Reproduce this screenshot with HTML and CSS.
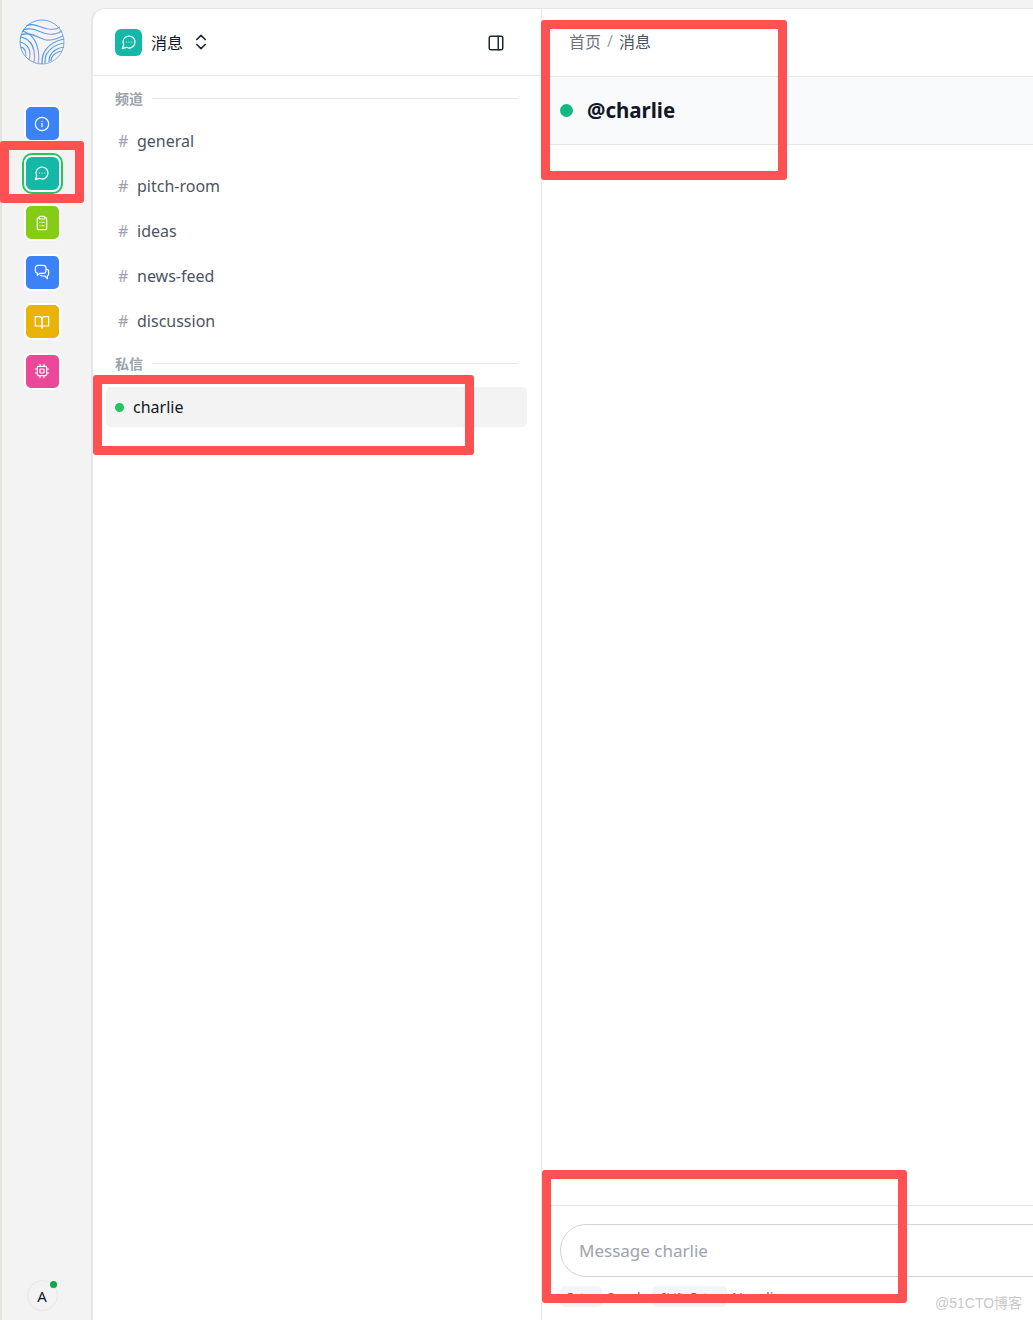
FILE: index.html
```html
<!DOCTYPE html>
<html lang="zh">
<head>
<meta charset="utf-8">
<title>消息</title>
<link rel="stylesheet" href="styles.css">
</head>
<body>
<div class="app">
  <nav class="rail">
    <svg class="logo" viewBox="0 0 46 46" fill="none" stroke-width="1.2">
      <defs>
        <linearGradient id="lg" x1="0" y1="0" x2="1" y2="1">
          <stop offset="0" stop-color="#3f95e6"/>
          <stop offset=".6" stop-color="#5b9fe0"/>
          <stop offset="1" stop-color="#b9a3d8"/>
        </linearGradient>
      </defs>
      <g stroke="url(#lg)">
        <circle cx="23" cy="23" r="22" stroke-width=".9"/>
        <path d="M7 7c8-4 15 2 22 3 5 1 9 0 12-2"/>
        <path d="M4 11c9-4 17 3 25 4 6 1 11-1 14-3"/>
        <path d="M2 16c9-4 17 3 25 5 7 1 13-2 17-4"/>
        <path d="M3 12c8 2 14 8 16 19 1 5 1 10 0 14"/>
        <path d="M1 18c8 1 13 7 14 14 1 5 1 8 0 12"/>
        <path d="M1 23c6 1 10 6 10 12 0 2 0 4-1 6"/>
        <path d="M2 28c4 1 5 5 5 9"/>
        <path d="M45 20c-10 2-18 8-21 16-1 3-1 5-1 9"/>
        <path d="M45 24c-8 1-15 6-18 12-1 3-1 5-1 8"/>
        <path d="M45 28c-7 1-12 5-14 9-1 2-1 4-1 6"/>
        <path d="M43 32c-5 1-8 3-10 6-1 1-1 2-1 4"/>
      </g>
    </svg>
    <div class="rail-items">
      <div class="rail-btn blue">
        <svg class="ic" viewBox="0 0 24 24"><circle cx="12" cy="12" r="10"/><path d="M12 16v-5M12 8h.01"/></svg>
      </div>
      <div class="rail-btn teal active">
        <svg class="ic" viewBox="0 0 24 24"><path d="M7.9 20A9 9 0 1 0 4 16.1L2 22Z"/><path d="M8 12h.01M12 12h.01M16 12h.01"/></svg>
      </div>
      <div class="rail-btn lime">
        <svg class="ic" viewBox="0 0 24 24"><rect x="8" y="2" width="8" height="4" rx="1"/><path d="M16 4h1a2 2 0 0 1 2 2v14a2 2 0 0 1-2 2H7a2 2 0 0 1-2-2V6a2 2 0 0 1 2-2h1"/><path d="M12 11h3M12 16h3M9 11h.01M9 16h.01"/></svg>
      </div>
      <div class="rail-btn blue">
        <svg class="ic" viewBox="0 0 24 24"><path d="M6 2h8a4 4 0 0 1 4 4v4a4 4 0 0 1-4 4H9l-4 3v-3.2A4 4 0 0 1 2 10V6a4 4 0 0 1 4-4z"/><path d="M18 8h1a3 3 0 0 1 3 3v4a3 3 0 0 1-2 2.8V22l-4-4h-4a3 3 0 0 1-2-1"/></svg>
      </div>
      <div class="rail-btn amber">
        <svg class="ic" viewBox="0 0 24 24"><path d="M2 4h6a4 4 0 0 1 4 4v13a3 3 0 0 0-3-3H2z"/><path d="M22 4h-6a4 4 0 0 0-4 4v13a3 3 0 0 1 3-3h7z"/></svg>
      </div>
      <div class="rail-btn pink">
        <svg class="ic" viewBox="0 0 24 24"><rect x="5" y="5" width="14" height="14" rx="2"/><rect x="9" y="9" width="6" height="6" rx="1"/><path d="M15 2v3M15 19v3M9 2v3M9 19v3M2 15h3M2 9h3M19 15h3M19 9h3"/></svg>
      </div>
    </div>
    <div class="avatar">A<span class="avatar-dot"></span></div>
  </nav>

  <aside class="panel">
    <header class="panel-head">
      <span class="panel-badge">
        <svg class="ic" viewBox="0 0 24 24"><path d="M7.9 20A9 9 0 1 0 4 16.1L2 22Z"/><path d="M8 12h.01M12 12h.01M16 12h.01"/></svg>
      </span>
      <span class="panel-title">消息</span>
      <svg class="ic-dark updown" viewBox="0 0 24 24"><path d="m7 15 5 5 5-5M7 9l5-5 5 5"/></svg>
      <svg class="ic-dark toggle" viewBox="0 0 24 24"><rect x="3" y="3" width="18" height="18" rx="2"/><path d="M15 3v18"/></svg>
    </header>
    <div class="section-label first"><span>频道</span><i></i></div>
    <ul class="channels">
      <li><b>#</b>general</li>
      <li><b>#</b>pitch-room</li>
      <li><b>#</b>ideas</li>
      <li><b>#</b>news-feed</li>
      <li><b>#</b>discussion</li>
    </ul>
    <div class="section-label"><span>私信</span><i></i></div>
    <div class="dm"><span class="dm-dot"></span>charlie</div>
  </aside>

  <main class="main">
    <div class="crumbs"><span>首页</span><em>/</em><strong>消息</strong></div>
    <div class="chat-head"><span class="chat-dot"></span><h1>@charlie</h1></div>
    <div class="messages"></div>
    <footer class="composer">
      <div class="input">Message charlie</div>
      <div class="hints">
        <kbd>Enter</kbd><span class="hint-send">Send</span>
        <kbd class="kbd-wide">Shift+Enter</kbd><span>New line</span>
      </div>
    </footer>
  </main>
</div>
<div class="mark mark-a"></div>
<div class="mark mark-b"></div>
<div class="mark mark-c"></div>
<div class="mark mark-d"></div>
<div class="watermark">@51CTO博客</div>
</body>
</html>
```

FILE: styles.css
```css
* { box-sizing: border-box; }
html, body { margin: 0; height: 100%; overflow: hidden; }
body {
  background: #f3f3f3;
  color: #111827;
  font-family: "Noto Sans", "Open Sans", "Noto Sans CJK SC", sans-serif;
  font-size: 16px;
}
.app { display: flex; height: 1320px; width: 1033px; border-left: 2px solid #e4e4de; }

.rail { width: 91px; flex: none; display: flex; flex-direction: column; align-items: center; padding: 19px 11px 9px 0; position: relative; }
.logo { width: 46px; height: 46px; flex: none; }
.rail-items { display: flex; flex-direction: column; gap: 12.6px; margin-top: 40px; }
.rail-btn { width: 37px; height: 37px; border: 2px solid #fff; border-radius: 7px; display: flex; align-items: center; justify-content: center; }
.rail-btn.blue { background: #3b82f6; }
.rail-btn.teal { background: #14b8a6; }
.rail-btn.lime { background: #84cc16; }
.rail-btn.amber { background: #eab308; }
.rail-btn.pink { background: #ec4899; }
.rail-btn.active { box-shadow: 0 0 0 2px #22c55e; border-radius: 8px; }
.ic { width: 16px; height: 16px; fill: none; stroke: #fff; stroke-width: 1.8; stroke-linecap: round; stroke-linejoin: round; }
.avatar { margin-top: auto; width: 31px; height: 31px; border: 1px solid #e5e7eb; border-radius: 50%; display: flex; align-items: center; justify-content: center; font-size: 15px; position: relative; }
.avatar-dot { position: absolute; top: 0; right: 0; width: 7px; height: 7px; border-radius: 50%; background: #16a34a; box-shadow: 0 0 0 1px #e8efe9; }

.panel { width: 449px; flex: none; margin-top: 9px; background: #fff; border-radius: 12px 0 0 0; border-right: 1px solid #e5e7eb; box-shadow: -2px 0 0 #e6e6ea, 0 -1px 0 #e6e6ea; display: flex; flex-direction: column; }
.panel-head { height: 67px; flex: none; display: flex; align-items: center; padding: 0 36px 0 22px; border-bottom: 1px solid #e5e7eb; }
.panel-badge { width: 27px; height: 27px; border-radius: 6px; background: #14b8a6; display: flex; align-items: center; justify-content: center; }
.panel-title { font-size: 16px; margin-left: 9px; }
.ic-dark { fill: none; stroke: #1f2937; stroke-width: 2; stroke-linecap: round; stroke-linejoin: round; }
.updown { width: 20px; height: 20px; margin-left: 8px; }
.toggle { width: 18px; height: 18px; margin-left: auto; margin-top: 2px; }
.section-label { display: flex; align-items: center; gap: 9px; padding: 0 23px 0 22px; font-size: 14px; font-weight: 700; color: #9ca3af; height: 20px; }
.section-label.first { margin-top: 12px; }
.section-label i { flex: 1; height: 1px; background: #e5e7eb; }
.channels { list-style: none; margin: 10px 0 0; padding: 0; }
.channels li { height: 45px; display: flex; align-items: center; padding-left: 25px; color: #4b5563; font-size: 16px; }
.channels b { font-weight: 400; color: #9ca3af; width: 19px; }
.channels + .section-label { margin-top: 10px; }
.dm { margin: 14px 14px 0 13px; height: 40px; background: #f3f3f3; border-radius: 5px; display: flex; align-items: center; padding-left: 9px; font-size: 16px; }
.dm-dot { width: 9px; height: 9px; border-radius: 50%; background: #22c55e; margin-right: 9px; }

.main { flex: 1; min-width: 0; margin-top: 8px; background: #fff; border-top: 1px solid #e5e7eb; display: flex; flex-direction: column; }
.crumbs { height: 68px; flex: none; padding: 0 0 4px 27px; display: flex; align-items: center; gap: 6px; font-size: 16px; color: #6b7280; border-bottom: 1px solid #e5e7eb; }
.crumbs em { font-style: normal; color: #9ca3af; }
.crumbs strong { font-weight: 400; color: #4b5563; }
.chat-head { height: 68px; flex: none; background: #f9fafb; border-bottom: 1px solid #e5e7eb; display: flex; align-items: center; padding-left: 18px; }
.chat-dot { width: 13px; height: 13px; border-radius: 50%; background: #10b981; margin-right: 14px; }
.chat-head h1 { margin: 0 0 2px; font-size: 20.5px; font-weight: 700; }
.messages { flex: 1; }
.composer { height: 115px; flex: none; border-top: 1px solid #e5e7eb; padding: 18px 0 0 18px; overflow: hidden; }
.input { width: 700px; height: 53px; border: 1px solid #d1d5db; border-radius: 26px; display: flex; align-items: center; padding-left: 18px; font-size: 17px; color: #9ca3af; }
.hints { display: flex; align-items: center; margin-top: 9px; font-size: 14.5px; color: #6b7280; }
.hints kbd { font: inherit; font-size: 11px; height: 21px; background: #f3f4f6; border-radius: 5px; display: flex; align-items: center; padding: 0 7px; }
.hints .kbd-wide { padding: 0 9px; }
.hints span { margin-left: 5px; }
.hint-send { margin-right: 11px; }

.mark { position: absolute; border: 9px solid #fe5252; border-radius: 3px; }
.mark-a { left: 0; top: 141px; width: 84px; height: 62px; }
.mark-b { left: 541px; top: 20px; width: 246px; height: 160px; }
.mark-c { left: 93px; top: 375px; width: 381px; height: 80px; }
.mark-d { left: 542px; top: 1170px; width: 365px; height: 133px; }
.watermark { position: absolute; left: 935px; top: 1292px; font-family: "Liberation Sans", "Noto Sans CJK SC", sans-serif; font-size: 14px; color: #c8c8c8; }
```
